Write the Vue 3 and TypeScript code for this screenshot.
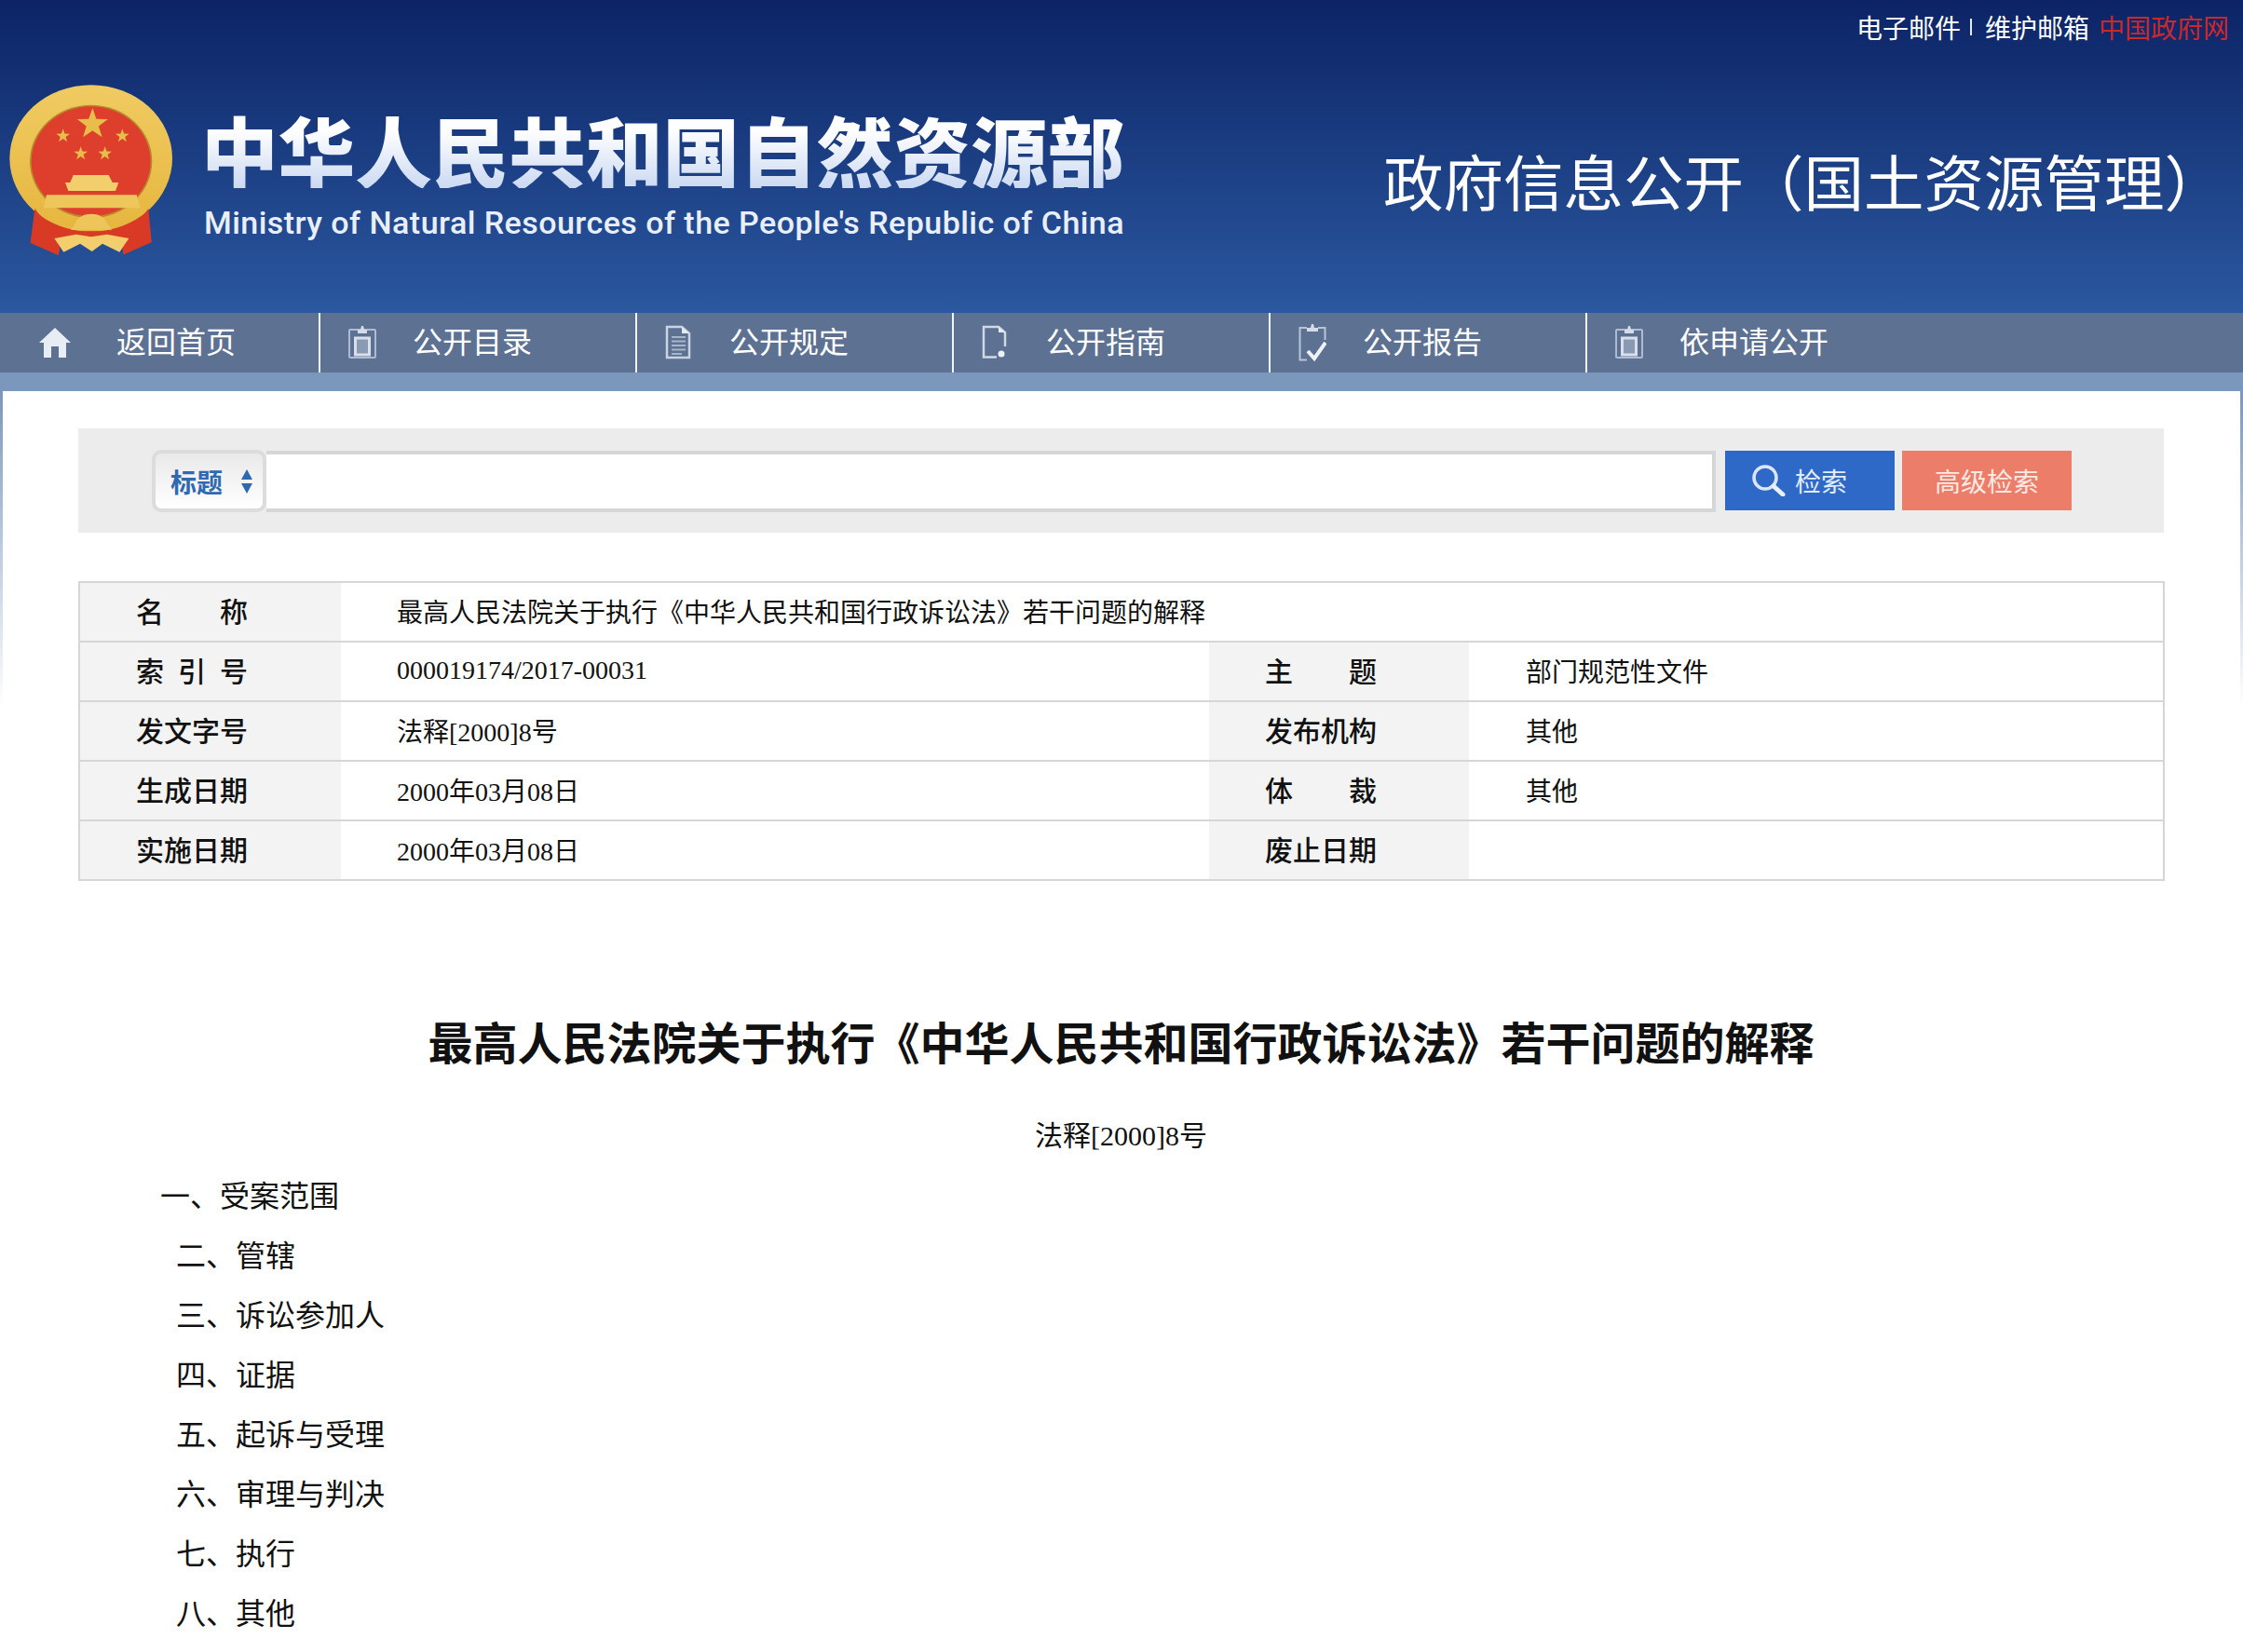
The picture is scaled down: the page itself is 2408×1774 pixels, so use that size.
<script setup lang="ts">
interface NavItem {
  label: string
  icon: 'home' | 'clip' | 'doc' | 'blank' | 'check'
}

interface MetaRow {
  label: string
  value: string
  label2?: string
  value2?: string
}

const navItems: NavItem[] = [
  { label: '返回首页', icon: 'home' },
  { label: '公开目录', icon: 'clip' },
  { label: '公开规定', icon: 'doc' },
  { label: '公开指南', icon: 'blank' },
  { label: '公开报告', icon: 'check' },
  { label: '依申请公开', icon: 'clip' }
]

const metaRows: MetaRow[] = [
  { label: '名　　称', value: '最高人民法院关于执行《中华人民共和国行政诉讼法》若干问题的解释' },
  { label: '索\u00a0\u00a0引\u00a0\u00a0号', value: '000019174/2017-00031', label2: '主　　题', value2: '部门规范性文件' },
  { label: '发文字号', value: '法释[2000]8号', label2: '发布机构', value2: '其他' },
  { label: '生成日期', value: '2000年03月08日', label2: '体　　裁', value2: '其他' },
  { label: '实施日期', value: '2000年03月08日', label2: '废止日期', value2: '' }
]

const sections = ['二、管辖', '三、诉讼参加人', '四、证据', '五、起诉与受理', '六、审理与判决', '七、执行', '八、其他']
const smallStars = [
  [203, 228, 23],
  [394, 228, 23],
  [260, 285, 23],
  [338, 285, 23]
]

function starPoints(cx: number, cy: number, r: number): string {
  const pts: string[] = []
  for (let i = 0; i < 10; i++) {
    const rad = i % 2 === 0 ? r : r * 0.4
    const a = -Math.PI / 2 + (i * Math.PI) / 5
    pts.push(`${(cx + rad * Math.cos(a)).toFixed(1)},${(cy + rad * Math.sin(a)).toFixed(1)}`)
  }
  return pts.join(' ')
}
</script>

<template>
  <div class="page">
    <header class="header">
      <div class="top-links">
        <span>电子邮件</span>
        <i class="pipe"></i>
        <span>维护邮箱</span>
        <span class="gov">中国政府网</span>
      </div>
      <div class="masthead">
        <svg class="emblem" viewBox="0 0 600 690" aria-hidden="true">
          <defs>
            <linearGradient id="goldGrad" x1="0" y1="0" x2="0" y2="1">
              <stop offset="0" stop-color="#f0cb62" />
              <stop offset="1" stop-color="#e6b63e" />
            </linearGradient>
          </defs>
          <path d="M115 460 L98 572 L188 612 L196 565 L290 560 L390 565 L398 610 L488 570 L470 460 Z" fill="#d93a26" />
          <ellipse cx="293" cy="300" rx="262" ry="236" fill="url(#goldGrad)" />
          <ellipse cx="293" cy="310" rx="197" ry="182" fill="#b98a2c" />
          <ellipse cx="293" cy="310" rx="192" ry="177" fill="#dd3f2c" />
          <polygon :points="starPoints(298, 190, 52)" fill="#e9bd4a" />
          <polygon v-for="s in smallStars" :key="s[0] + '-' + s[1]" :points="starPoints(s[0], s[1], s[2])" fill="#e9bd4a" />
          <path d="M236 354 H350 L362 378 H382 L372 405 H220 L210 378 H226 Z" fill="#f2cf6c" />
          <path d="M150 418 H440 L452 460 H140 Z" fill="#eec75c" />
          <path d="M112 462 C140 505 190 525 250 535 H340 C400 525 450 505 478 462 L488 570 L398 610 L392 566 L290 556 L196 566 L188 612 L98 572 Z" fill="#d93a26" />
          <path d="M244 508 C256 470 332 470 344 508 L360 530 L228 530 Z" fill="#eec55a" />
          <path d="M175 558 L245 545 L293 553 L345 545 L415 558 L385 602 L330 575 L296 600 L258 575 L205 602 Z" fill="#f2cf6c" />
        </svg>
        <div class="brand">
          <div class="brand-cn">中华人民共和国自然资源部</div>
          <div class="brand-en">Ministry of Natural Resources of the People's Republic of China</div>
        </div>
        <h1 class="site-title">政府信息公开（国土资源管理）</h1>
      </div>
    </header>

    <nav class="nav">
      <a v-for="item in navItems" :key="item.label" class="nav-item">
        <span class="nav-icon">
          <svg v-if="item.icon === 'home'" viewBox="0 0 34 34" width="34" height="34">
            <path d="M17 1 L34 17 H29 V33 H21 V21 H13 V33 H5 V17 H0 Z" fill="#e8edf4" />
          </svg>
          <svg v-else-if="item.icon === 'clip'" viewBox="0 0 30 36" width="30" height="36">
            <rect x="1" y="4" width="28" height="30" rx="1" fill="none" stroke="#aebbd0" stroke-width="2" />
            <path d="M10 8 V4 H13 L14 0 H16 L17 4 H20 V8 Z" fill="#d4dce8" />
            <rect x="7.5" y="13" width="15" height="18" fill="#8b9ab4" stroke="#d8e0eb" stroke-width="3" />
          </svg>
          <svg v-else-if="item.icon === 'doc'" viewBox="0 0 28 38" width="28" height="38">
            <path d="M2 2 H18 L26 9 V35 H2 Z" fill="none" stroke="#c9d3e1" stroke-width="2.5" />
            <path d="M18 2 L26 9 H18 Z" fill="#e6ebf2" />
            <path d="M7 13 H22 M7 17.5 H22 M7 22 H22 M7 26.5 H22 M7 31 H18" stroke="#a9b6ca" stroke-width="2" />
          </svg>
          <svg v-else-if="item.icon === 'blank'" viewBox="0 0 28 38" width="28" height="38">
            <path d="M16 34.5 H2 V2 H18 L25 8 V23" fill="none" stroke="#cfd8e5" stroke-width="2.5" />
            <path d="M18 2 L25 8 H18 Z" fill="#e6ebf2" />
            <circle cx="21" cy="31" r="3.5" fill="#eef2f7" />
          </svg>
          <svg v-else viewBox="0 0 30 40" width="30" height="40">
            <path d="M9 4 H1.5 V38.5 H9 M21 4 H28.5 V17" fill="none" stroke="#b9c5d7" stroke-width="2" />
            <path d="M9 8 V4 H13 L14 0 H16 L17 4 H21 V8 Z" fill="#d4dce8" />
            <path d="M10 29 L17 37 L29 20" fill="none" stroke="#eef2f7" stroke-width="4" />
          </svg>
        </span>
        <span class="nav-label">{{ item.label }}</span>
      </a>
    </nav>
    <div class="nav-band"></div>

    <main class="main">
      <div class="search-bar">
        <div class="search-type">
          <span>标题</span>
          <svg viewBox="0 0 14 26" width="14" height="26">
            <path d="M7 0 L13 11 H1 Z M1 15 H13 L7 26 Z" fill="#2f69b0" />
          </svg>
        </div>
        <input class="search-input" type="text" />
        <button class="btn btn-search" type="button">
          <svg viewBox="0 0 36 34" width="36" height="34">
            <ellipse cx="14" cy="14" rx="12" ry="12" fill="none" stroke="#dbe7f8" stroke-width="3.5" />
            <path d="M23 23 L33 32" stroke="#e8f0fb" stroke-width="5" stroke-linecap="round" />
          </svg>
          <span>检索</span>
        </button>
        <button class="btn btn-advanced" type="button">高级检索</button>
      </div>

      <table class="meta">
        <colgroup>
          <col class="col-label" />
          <col class="col-value" />
          <col class="col-label2" />
          <col />
        </colgroup>
        <tbody>
          <tr v-for="row in metaRows" :key="row.label">
            <th>{{ row.label }}</th>
            <td :colspan="row.label2 ? 1 : 3">{{ row.value }}</td>
            <template v-if="row.label2">
              <th>{{ row.label2 }}</th>
              <td class="value2">{{ row.value2 }}</td>
            </template>
          </tr>
        </tbody>
      </table>

      <article class="article">
        <h2 class="article-title">最高人民法院关于执行《中华人民共和国行政诉讼法》若干问题的解释</h2>
        <p class="article-no">法释[2000]8号</p>
        <p class="article-line first">一、受案范围</p>
        <p v-for="line in sections" :key="line" class="article-line">{{ line }}</p>
      </article>
    </main>
  </div>
</template>

<style scoped>
.page {
  height: 1774px;
  overflow: hidden;
  display: flex;
  flex-direction: column;
  background: linear-gradient(#7b97bc 420px, #ffffff 760px);
  font-family: "Liberation Serif", "Noto Sans CJK SC", serif;
  color: #111;
}

.header {
  height: 336px;
  background: linear-gradient(#0c2466, #2b58a0);
  color: #fff;
}

.top-links {
  height: 60px;
  box-sizing: border-box;
  padding: 0 15px 2px 0;
  display: flex;
  align-items: center;
  justify-content: flex-end;
  font-size: 28px;
}

.pipe {
  width: 2px;
  height: 18px;
  margin: 0 14px 0 10px;
  background: #e6ebf4;
}

.gov {
  margin-left: 10px;
  color: #c9282d;
}

.masthead {
  display: flex;
  align-items: flex-start;
  margin-top: 10px;
  height: 230px;
}

.emblem {
  width: 200px;
  height: 230px;
  flex: none;
  margin-right: 16px;
}

.brand {
  padding-top: 48px;
  width: 997px;
}

.brand-cn {
  height: 84px;
  font-family: "Noto Sans CJK SC", sans-serif;
  font-size: 82.6px;
  line-height: 84px;
  font-weight: 900;
  white-space: nowrap;
  background: linear-gradient(#ffffff 25%, #cbd9f2);
  -webkit-background-clip: text;
  background-clip: text;
  color: transparent;
}

.brand-en {
  margin-top: 17px;
  margin-left: 3px;
  height: 40px;
  font-family: Roboto, "Liberation Sans", sans-serif;
  font-size: 34px;
  line-height: 40px;
  font-weight: 500;
  letter-spacing: 0.46px;
  white-space: nowrap;
  color: #e9eff9;
}

.site-title {
  margin: 95px 0 0 272px;
  font-size: 64.5px;
  line-height: 70px;
  font-weight: 400;
  white-space: nowrap;
}

.nav {
  height: 64px;
  display: flex;
  background: #5d7192;
}

.nav-item {
  width: 340px;
  display: flex;
  align-items: center;
  padding-left: 30px;
  box-sizing: border-box;
  border-right: 2px solid #f2f4f8;
  color: #fff;
}

.nav-item:first-child {
  width: 344px;
  padding-left: 42px;
}

.nav-item:last-child {
  border-right: none;
}

.nav-icon {
  width: 28px;
  margin-right: 41px;
  display: flex;
  align-items: center;
  flex: none;
}

.nav-icon svg {
  flex: none;
}

.nav-item:first-child .nav-icon {
  width: 32px;
  margin-right: 51px;
}

.nav-label {
  font-size: 32px;
  line-height: 60px;
  margin-bottom: 1px;
  white-space: nowrap;
}

.nav-band {
  height: 20px;
  background: #7b97bc;
}

.main {
  flex: 1;
  margin: 0 3px;
  padding: 40px 82px 0 81px;
  background: #fff;
}

.search-bar {
  height: 112px;
  box-sizing: border-box;
  display: flex;
  align-items: flex-start;
  padding: 24px 0 0 79px;
  background: #ececec;
}

.search-type {
  width: 123px;
  height: 67px;
  box-sizing: border-box;
  margin-top: -1px;
  display: flex;
  align-items: center;
  gap: 19px;
  padding-left: 16px;
  border: 4px solid #dcdcdc;
  border-radius: 10px;
  background: linear-gradient(#e9e9e9, #ffffff);
  font-family: "Noto Sans CJK SC", sans-serif;
  font-size: 28px;
  font-weight: 700;
  color: #2f69b0;
}

.search-input {
  width: 1556px;
  height: 66px;
  box-sizing: border-box;
  border: 4px solid #d6d6d6;
  border-left: none;
  background: #fff;
  outline: none;
}

.btn {
  height: 64px;
  width: 182px;
  border: none;
  padding: 0;
  display: flex;
  align-items: center;
  justify-content: center;
  font-family: "Noto Sans CJK SC", sans-serif;
  font-size: 28px;
  color: #fff;
}

.btn-search {
  margin-left: 10px;
  gap: 10px;
  justify-content: flex-start;
  padding-left: 29px;
  background: #2f69c8;
  color: #e2ecfa;
}

.btn-advanced {
  margin-left: 8px;
  background: #ec7d69;
  color: #fde9e4;
}

.meta {
  width: 2240px;
  margin-top: 52px;
  border-collapse: collapse;
  table-layout: fixed;
  border: 2px solid #d6d6d6;
  font-size: 28px;
}

.col-label {
  width: 281px;
}

.col-value {
  width: 932px;
}

.col-label2 {
  width: 279px;
}

.meta tr {
  height: 64px;
  border-top: 2px solid #d6d6d6;
}

.meta th,
.meta td {
  padding: 0;
  text-align: left;
}

.meta th {
  padding: 0 0 5px 60px;
  background: #f3f3f3;
  font-size: 30px;
  font-weight: 500;
}

.meta td {
  padding: 0 0 2px 60px;
}

.meta td.value2 {
  padding-left: 61px;
}

.article {
  margin-top: 144px;
}

.article-title {
  margin: 0;
  text-align: center;
  font-size: 48px;
  line-height: 64px;
  font-weight: 700;
  white-space: nowrap;
}

.article-no {
  margin: 34px 0 1px;
  text-align: center;
  font-size: 30px;
  line-height: 64px;
}

.article-line {
  margin: 0;
  padding-left: 105px;
  font-size: 32px;
  line-height: 64px;
}

.article-line.first {
  padding-left: 88px;
}
</style>

<style>
html,
body {
  margin: 0;
  overflow: hidden;
}
</style>
